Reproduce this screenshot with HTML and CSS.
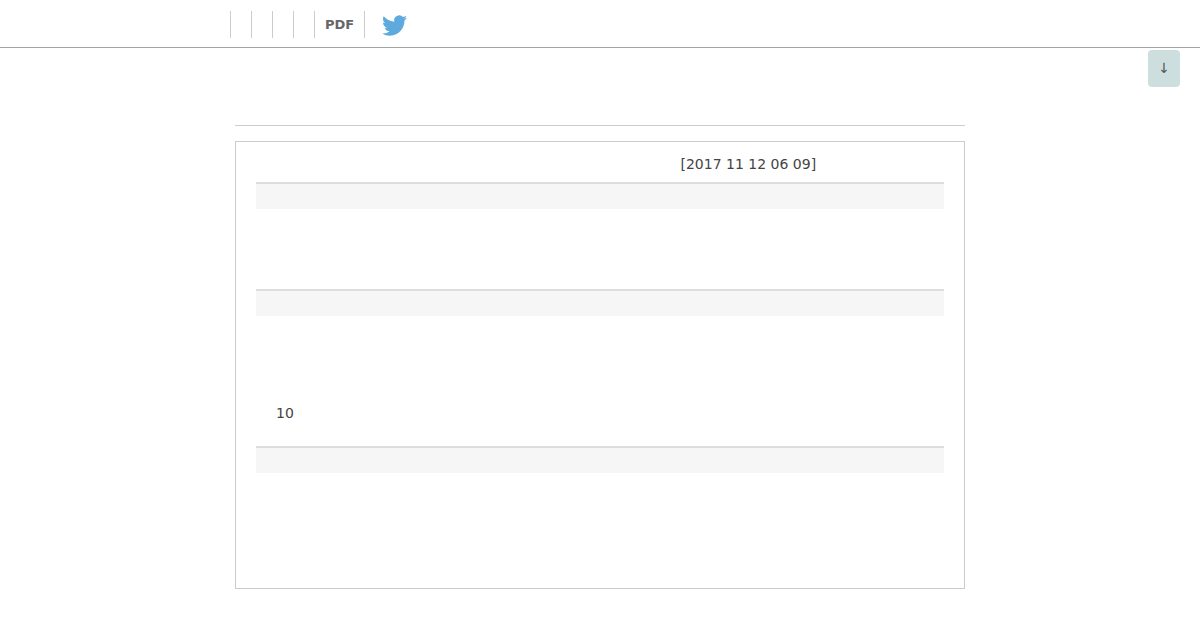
FILE: index.html
```html
<!DOCTYPE html>
<html lang="ja">
<head>
<meta charset="utf-8">
<title>Document</title>
<link rel="stylesheet" href="styles.css">
</head>
<body>
<header class="topbar">
  <nav class="nav">
    <a class="nav-item"></a>
    <a class="nav-item"></a>
    <a class="nav-item"></a>
    <a class="nav-item"></a>
    <a class="nav-item nav-pdf">PDF</a>
    <a class="nav-item nav-twitter">
      <svg class="twitter" viewBox="0 0 24 24" width="25" height="25" aria-hidden="true">
        <path d="M23.95 4.57a10 10 0 0 1-2.82.77 4.96 4.96 0 0 0 2.16-2.72c-.95.55-2 .95-3.12 1.18a4.92 4.92 0 0 0-8.38 4.48C7.69 8.09 4.07 6.13 1.64 3.16a4.82 4.82 0 0 0-.67 2.48c0 1.71.87 3.21 2.19 4.1a4.9 4.9 0 0 1-2.23-.61v.06c0 2.39 1.7 4.38 3.95 4.83a5 5 0 0 1-2.21.09 4.94 4.94 0 0 0 4.6 3.42 9.87 9.87 0 0 1-6.1 2.1c-.39 0-.78-.02-1.17-.07a14 14 0 0 0 7.56 2.21c9.05 0 14-7.5 14-13.98 0-.21 0-.42-.02-.63a9.94 9.94 0 0 0 2.41-2.59z"/>
      </svg>
    </a>
  </nav>
</header>
<a class="scroll-down">↓</a>
<main class="page">
  <hr class="rule">
  <section class="card">
    <div class="date-row"><span class="date">[2017 11 12 06 09]</span></div>
    <div class="band"></div>
    <div class="gap gap-first"></div>
    <div class="band"></div>
    <div class="gap gap-second"><span class="num">10</span></div>
    <div class="band"></div>
  </section>
</main>
</body>
</html>
```
FILE: styles.css
```css
* { box-sizing: border-box; }
html, body { margin: 0; padding: 0; }
body {
  background: #fff;
  color: #444;
  font-family: "DejaVu Sans", sans-serif;
  font-size: 14px;
  height: 630px;
  overflow: hidden;
}
.topbar {
  height: 48px;
  border-bottom: 1px solid #a4a4a4;
  padding: 11px 0 0 230px;
}
.nav { display: flex; align-items: flex-start; }
.nav-item {
  display: flex;
  align-items: center;
  width: 21px;
  height: 27px;
  border-left: 1px solid #ccc;
}
.nav-pdf {
  width: 50px;
  padding-left: 10px;
  font-size: 13px;
  font-weight: 700;
  color: #666;
}
.nav-twitter { width: auto; padding: 2px 0 0 17px; }
.twitter { display: block; fill: #5ea9dd; }
.scroll-down {
  position: fixed;
  left: 1148px;
  top: 50px;
  width: 32px;
  height: 37px;
  padding-bottom: 2px;
  display: flex;
  align-items: center;
  justify-content: center;
  background: #cddede;
  border-radius: 4px;
  color: #555;
  font-size: 14px;
}
.page { width: 730px; margin: 0 auto; padding-top: 77px; }
.rule { margin: 0 0 15px; border: 0; border-top: 1px solid #ccc; }
.card {
  height: 448px;
  border: 1px solid #ccc;
  padding: 0 20px;
}
.date-row {
  height: 40px;
  padding: 14px 0 0 424.5px;
  line-height: 17px;
}
.band {
  height: 27px;
  background: #f6f6f6;
  border-top: 2px solid #ddd;
}
.gap-first { height: 80px; }
.gap-second { height: 130px; padding: 89px 0 0 20px; line-height: 17px; }
```
